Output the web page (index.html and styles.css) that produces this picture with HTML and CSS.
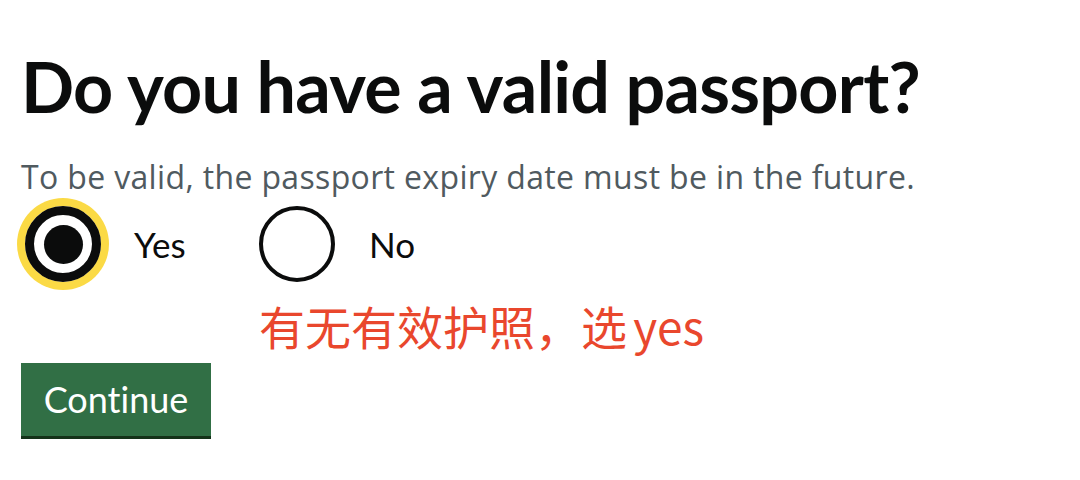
FILE: index.html
```html
<!DOCTYPE html>
<html lang="en">
<head>
<meta charset="utf-8">
<title>Do you have a valid passport?</title>
<link rel="stylesheet" href="styles.css">
</head>
<body>
<main class="page">
  <h1 class="heading">Do you have a valid passport?</h1>
  <p class="hint">To be valid, the passport expiry date must be in the future.</p>
  <div class="radios">
    <label class="radio radio-yes">
      <span class="circle circle-checked"><span class="dot"></span></span>
      <span class="radio-label">Yes</span>
    </label>
    <label class="radio radio-no">
      <span class="circle"></span>
      <span class="radio-label">No</span>
    </label>
  </div>
  <p class="note">有无有效护照，选 yes</p>
  <button class="button" type="button">Continue</button>
</main>
</body>
</html>
```

FILE: styles.css
```css
html, body {
  margin: 0;
  padding: 0;
  background: #ffffff;
}

.page {
  padding: 46px 0 0 21px;
  font-family: Lato, "Noto Sans", sans-serif;
  font-variant-ligatures: none;
  color: #0b0c0c;
}

.heading {
  margin: 0;
  font-size: 70px;
  line-height: 80px;
  font-weight: 700;
  letter-spacing: -0.75px;
  color: #0b0c0c;
}

.hint {
  margin: 31px 0 0 0;
  font-family: "Open Sans", Lato, sans-serif;
  font-size: 32px;
  line-height: 40px;
  letter-spacing: 0.35px;
  color: #505a5f;
}

.radios {
  margin-top: 9px;
  display: flex;
  align-items: center;
}

.radio {
  display: flex;
  align-items: center;
}

.radio-yes {
  margin-left: 4px;
  width: 234px;
}

.circle {
  box-sizing: border-box;
  width: 76px;
  height: 76px;
  border-radius: 50%;
  border: 4px solid #0b0c0c;
  display: flex;
  align-items: center;
  justify-content: center;
  flex: none;
}

.circle-checked {
  border-width: 9px;
  box-shadow: 0 0 0 8px #fbda45;
}

.dot {
  width: 39px;
  height: 39px;
  border-radius: 50%;
  background: #0b0c0c;
}

.radio-label {
  margin-left: 33px;
  font-size: 35px;
  line-height: 40px;
  color: #0b0c0c;
}

.radio-no .radio-label {
  margin-left: 34px;
}

.note {
  margin: 15px 0 0 238px;
  font-family: "Noto Sans CJK SC", sans-serif;
  font-size: 46px;
  line-height: 56px;
  word-spacing: -4px;
  color: #e9472d;
}

.button {
  display: block;
  box-sizing: border-box;
  margin-top: 10px;
  width: 190px;
  height: 76px;
  padding: 16px 0 20px 0;
  border: 0;
  border-bottom: 3px solid #143219;
  border-radius: 0;
  background: #316f45;
  font-family: Lato, "Noto Sans", sans-serif;
  font-variant-ligatures: none;
  font-size: 36px;
  line-height: 40px;
  color: #ffffff;
  text-align: center;
}
```
